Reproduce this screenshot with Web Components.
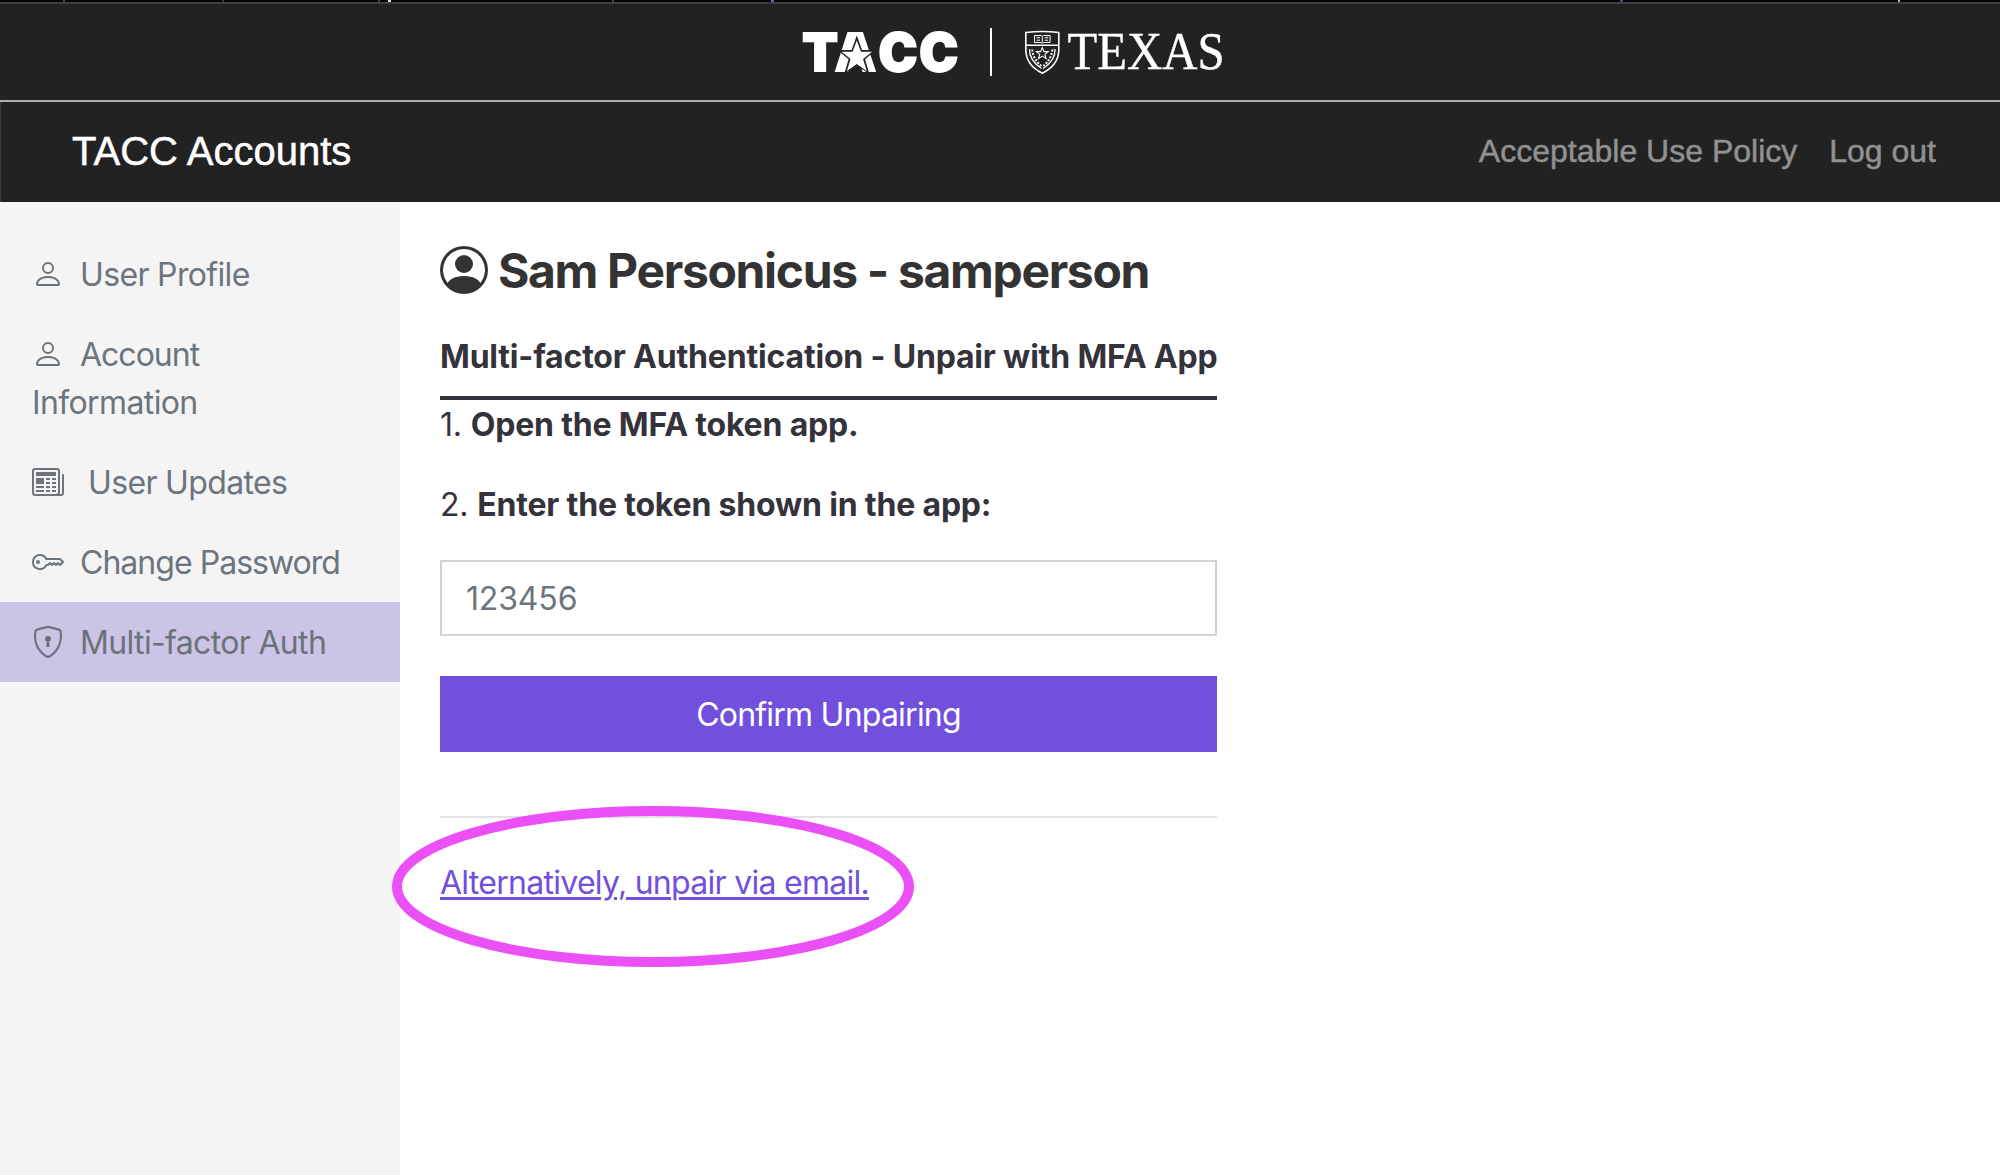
<!DOCTYPE html>
<html lang="en"><head><meta charset="utf-8"><title>TACC Accounts</title>
<style>
html,body{margin:0;height:100%;overflow:hidden;background:#fff}
body{font:32px/48px Inter,"Liberation Sans",sans-serif;color:#34323a}
</style></head><body>
<tacc-app></tacc-app>
<script>
const define=(name,html)=>{
  const t=document.createElement('template');t.innerHTML=html;
  customElements.define(name,class extends HTMLElement{
    constructor(){super();this.attachShadow({mode:'open'}).append(t.content.cloneNode(true));}
  });
};
const ICONS={
person:'<path d="M8 8a3 3 0 1 0 0-6 3 3 0 0 0 0 6zm2-3a2 2 0 1 1-4 0 2 2 0 0 1 4 0zm4 8c0 1-1 1-1 1H3s-1 0-1-1 1-4 6-4 6 3 6 4zm-1-.004c-.001-.246-.154-.986-.832-1.664C11.516 10.68 10.289 10 8 10c-2.29 0-3.516.68-4.168 1.332-.678.678-.83 1.418-.832 1.664h10z"/>',
news:'<path d="M0 2.5A1.5 1.5 0 0 1 1.5 1h11A1.5 1.5 0 0 1 14 2.5v10.528c0 .3-.05.654-.238.972h.738a.5.5 0 0 0 .5-.5v-9a.5.5 0 0 1 1 0v9a1.5 1.5 0 0 1-1.5 1.5H1.497A1.497 1.497 0 0 1 0 13.5v-11zM12 14c.37 0 .654-.211.853-.441.092-.106.147-.279.147-.531V2.5a.5.5 0 0 0-.5-.5h-11a.5.5 0 0 0-.5.5v11c0 .278.223.5.497.5H12z"/><path d="M2 3h10v2H2V3zm0 3h4v3H2V6zm0 4h4v1H2v-1zm0 2h4v1H2v-1zm5-6h2v1H7V6zm3 0h2v1h-2V6zM7 8h2v1H7V8zm3 0h2v1h-2V8zm-3 2h2v1H7v-1zm3 0h2v1h-2v-1zm-3 2h2v1H7v-1zm3 0h2v1h-2v-1z"/>',
key:'<path d="M0 8a4 4 0 0 1 7.465-2H14a.5.5 0 0 1 .354.146l1.5 1.5a.5.5 0 0 1 0 .708l-1.5 1.5a.5.5 0 0 1-.708 0L13 9.207l-.646.647a.5.5 0 0 1-.708 0L11 9.207l-.646.647a.5.5 0 0 1-.708 0L9 9.207l-.646.647A.5.5 0 0 1 8 10h-.535A4 4 0 0 1 0 8zm4-3a3 3 0 1 0 2.712 4.285A.5.5 0 0 1 7.163 9h.63l.853-.854a.5.5 0 0 1 .708 0l.646.647.646-.647a.5.5 0 0 1 .708 0l.646.647.646-.647a.5.5 0 0 1 .708 0l.646.647.793-.793-1-1h-6.63a.5.5 0 0 1-.451-.285A3 3 0 0 0 4 5z"/><path d="M4 8a1 1 0 1 1-2 0 1 1 0 0 1 2 0z"/>',
shield:'<path d="M5.338 1.59a61.44 61.44 0 0 0-2.837.856.481.481 0 0 0-.328.39c-.554 4.157.726 7.19 2.253 9.188a10.725 10.725 0 0 0 2.287 2.233c.346.244.652.42.893.533.12.057.218.095.293.118a.55.55 0 0 0 .101.025.615.615 0 0 0 .1-.025c.076-.023.174-.061.294-.118.24-.113.547-.29.893-.533a10.726 10.726 0 0 0 2.287-2.233c1.527-1.997 2.807-5.031 2.253-9.188a.48.48 0 0 0-.328-.39c-.651-.213-1.75-.56-2.837-.855C9.552 1.29 8.531 1.067 8 1.067c-.53 0-1.552.223-2.662.524zM5.072.56C6.157.265 7.31 0 8 0s1.843.265 2.928.56c1.11.3 2.229.655 2.887.87a1.54 1.54 0 0 1 1.044 1.262c.596 4.477-.787 7.795-2.465 9.99a11.775 11.775 0 0 1-2.517 2.453 7.159 7.159 0 0 1-1.048.625c-.28.132-.581.24-.829.24s-.548-.108-.829-.24a7.158 7.158 0 0 1-1.048-.625 11.777 11.777 0 0 1-2.517-2.453C1.928 10.487.545 7.169 1.141 2.692A1.54 1.54 0 0 1 2.185 1.43 62.456 62.456 0 0 1 5.072.56z"/><path d="M9.5 6.5a1.5 1.5 0 0 1-1 1.415l.385 1.99a.5.5 0 0 1-.491.595h-.788a.5.5 0 0 1-.49-.595l.384-1.99a1.5 1.5 0 1 1 2-1.415z"/>',
circle:'<path d="M11 6a3 3 0 1 1-6 0 3 3 0 0 1 6 0z"/><path fill-rule="evenodd" d="M0 8a8 8 0 1 1 16 0A8 8 0 0 1 0 8zm8-7a7 7 0 0 0-5.468 11.37C3.242 11.226 4.805 10 8 10s4.757 1.225 5.468 2.37A7 7 0 0 0 8 1z"/>'
};
customElements.define('tacc-icon',class extends HTMLElement{
  connectedCallback(){
    this.attachShadow({mode:'open'}).innerHTML='<style>:host{display:inline-block;width:32px;height:32px}svg{display:block;width:100%;height:100%;fill:currentColor}</style><svg viewBox="0 0 16 16">'+ICONS[this.getAttribute('name')]+'</svg>';
  }
});
define('tacc-brand-bar',`<style>
:host{display:flex;flex-direction:column;box-sizing:border-box;height:102px;background:#222;border-bottom:2px solid #afafaf}
.strip{height:2px;border-bottom:2px solid #3f3f3f;background:
 linear-gradient(#dde,#dde) 388px 0/3px 2px no-repeat,
 linear-gradient(#334a66,#334a66) 63px 0/2px 2px no-repeat,
 linear-gradient(#334,#334) 222px 0/2px 2px no-repeat,
 linear-gradient(#334a66,#334a66) 378px 0/2px 2px no-repeat,
 linear-gradient(#334a66,#334a66) 612px 0/2px 2px no-repeat,
 linear-gradient(#6a62b0,#6a62b0) 771px 0/3px 2px no-repeat,
 linear-gradient(#4c4788,#4c4788) 1620px 0/3px 2px no-repeat,
 linear-gradient(#bbc,#bbc) 1898px 0/2px 2px no-repeat,#040406}
.logos{display:flex;align-items:center;justify-content:center;height:96px}
svg{display:block;margin-left:28px;overflow:visible}
</style><div class="strip"></div><div class="logos"><svg width="440" height="60" viewBox="794 22 440 60" fill="#fff">
<text x="802.3 834.8 878.6 919.2" y="70.900" font-family="Inter" font-weight="900" font-size="52" stroke="#fff" stroke-width="1.800">TACC</text>
<path d="M856.8 35.5l5.2 14.400h14.2l-11.2 9.3 4.400 14.800-12.600-8.600-12.600 8.600 4.400-14.800-11.2-9.3h14.2z" fill="#222"/>
<path d="M856.8 40.500l4.200 11.2h11l-8.900 7.2 3.600 12.100-9.900-7-9.900 7 3.600-12.100-8.900-7.2h11z"/>
<rect x="990" y="28" width="2" height="48"/>
<g fill="none" stroke="#fff">
<path d="M1025.8 32.5q16.5-2 33 0v17c0 12-7 19-16.5 23.700c-9.500-4.700-16.500-11.700-16.500-23.700z" stroke-width="1.600"/>
<path d="M1026 45.200h32.600" stroke-width="1.400"/>
<path d="M1034.500 35.500h6.500l1.300.8 1.300-.8h6.500v7h-6.500l-1.300.7-1.300-.7h-6.500zM1042.300 36.500v6M1036.500 37.700h3.500M1036.500 40.200h3.500M1044.700 37.700h3.500M1044.700 40.200h3.500" stroke-width="1"/>
<path d="M1042.300 47.600l1.700 4h4.200l-3.300 2.800 1.200 4.200-3.800-2.500-3.800 2.500 1.200-4.200-3.300-2.800h4.200z" stroke-width="1.100"/>
<path d="M1029.500 49q-.5 11 12 19.500M1055.100 49q.5 11-12 19.500" stroke-width="1.300"/>
<path d="M1032.200 49.500q1 9.500 9 16.500M1052.400 49.500q-1 9.500-9 16.500" stroke-width="2" stroke-dasharray="2 1.500"/>
</g>
<text x="1067.500" y="68.700" font-family="Liberation Serif" font-size="53" textLength="157" lengthAdjust="spacingAndGlyphs" stroke="#fff" stroke-width=".4">TEXAS</text>
</svg></div>`);
define('tacc-header',`<style>
:host{display:flex;box-sizing:border-box;justify-content:space-between;align-items:center;height:100px;padding:0 64px 2px 71px;background:#222;border-left:1px solid #3f3f3f;font-family:"Liberation Sans",sans-serif;color:#919191;-webkit-text-stroke:.5px}
h1{margin:0;font:40px/60px "Liberation Sans",sans-serif;color:#fff}
nav{display:flex;gap:32px}
</style><h1>TACC Accounts</h1><nav><span>Acceptable Use Policy</span><span>Log out</span></nav>`);
customElements.define('tacc-side-item',class extends HTMLElement{
  connectedCallback(){
    this.attachShadow({mode:'open'}).innerHTML=`<style>
:host{display:block;padding:17px 32px 15px;color:#6c757d;letter-spacing:-.66px}
:host([active]){background:#cbc4e7;color:#6c7378}
tacc-icon{vertical-align:-4px;margin-right:16px}
:host([wide]) tacc-icon{margin-right:24px}
</style><tacc-icon name="${this.getAttribute('icon')}"></tacc-icon><slot></slot>`;
  }
});
define('tacc-sidebar',`<style>:host{display:block;box-sizing:border-box;width:400px;padding-top:32px;background:#f4f4f4}</style>
<tacc-side-item icon="person">User Profile</tacc-side-item>
<tacc-side-item icon="person"><span style="letter-spacing:-1px">Account</span><br><span style="letter-spacing:-.62px">Information</span></tacc-side-item>
<tacc-side-item icon="news" wide>User Updates</tacc-side-item>
<tacc-side-item icon="key"><span style="letter-spacing:-.97px">Change Password</span></tacc-side-item>
<tacc-side-item icon="shield" active>Multi-factor Auth</tacc-side-item>`);
define('tacc-unpair-form',`<style>
:host{display:block;width:777px;padding:38px 0 0 40px}
h2{display:flex;align-items:center;margin:0;gap:10px;height:60px;font-size:48px;line-height:60px;font-weight:700;color:#333;letter-spacing:-1.34px;white-space:nowrap}
h2 span{padding-top:2px}
h2 tacc-icon{width:48px;height:48px}
h3{margin:33px 0 0;height:63px;font-size:32px;line-height:48px;font-weight:700;letter-spacing:-.18px;border-bottom:4px solid #34323a;white-space:nowrap}
p{margin:0 0 32px}
.step{white-space:nowrap;padding-top:1px;margin-bottom:31px;letter-spacing:-.18px}
.field{box-sizing:border-box;height:76px;border:2px solid #ced4da;padding:13px 24px 11px;color:#6c757d;letter-spacing:-.15px}
.btn{box-sizing:border-box;height:76px;margin-top:40px;padding-top:1px;line-height:76px;text-align:center;background:#7050dd;color:#fff;letter-spacing:-.77px}
hr{margin:64px 0 41px;border:0;height:2px;background:#e3e3e3}
.alt{position:relative;letter-spacing:-.72px}
a{color:#7050dd;text-decoration:underline;text-decoration-thickness:3px;text-underline-offset:3px}
.mark{position:absolute;left:-50px;top:-58px;overflow:visible}
</style>
<h2><tacc-icon name="circle"></tacc-icon><span>Sam Personicus - samperson</span></h2>
<h3>Multi-factor Authentication - Unpair with MFA App</h3>
<p class="step">1. <b>Open the MFA token app.</b></p>
<p class="step">2. <b>Enter the token shown in the app:</b></p>
<div class="field">123456</div>
<div class="btn">Confirm Unpairing</div>
<hr>
<div class="alt"><a href="#">Alternatively, unpair via email.</a>
<svg class="mark" width="526" height="170"><ellipse cx="263" cy="85.500" rx="256" ry="75.500" fill="none" stroke="#eb50f7" stroke-width="10"/></svg></div>`);
define('tacc-app',`<style>:host{display:flex;flex-direction:column;height:1175px;width:2000px}.body{display:flex;flex:1}</style>
<tacc-brand-bar></tacc-brand-bar><tacc-header></tacc-header><div class="body"><tacc-sidebar></tacc-sidebar><tacc-unpair-form></tacc-unpair-form></div>`);
</script>
</body></html>
